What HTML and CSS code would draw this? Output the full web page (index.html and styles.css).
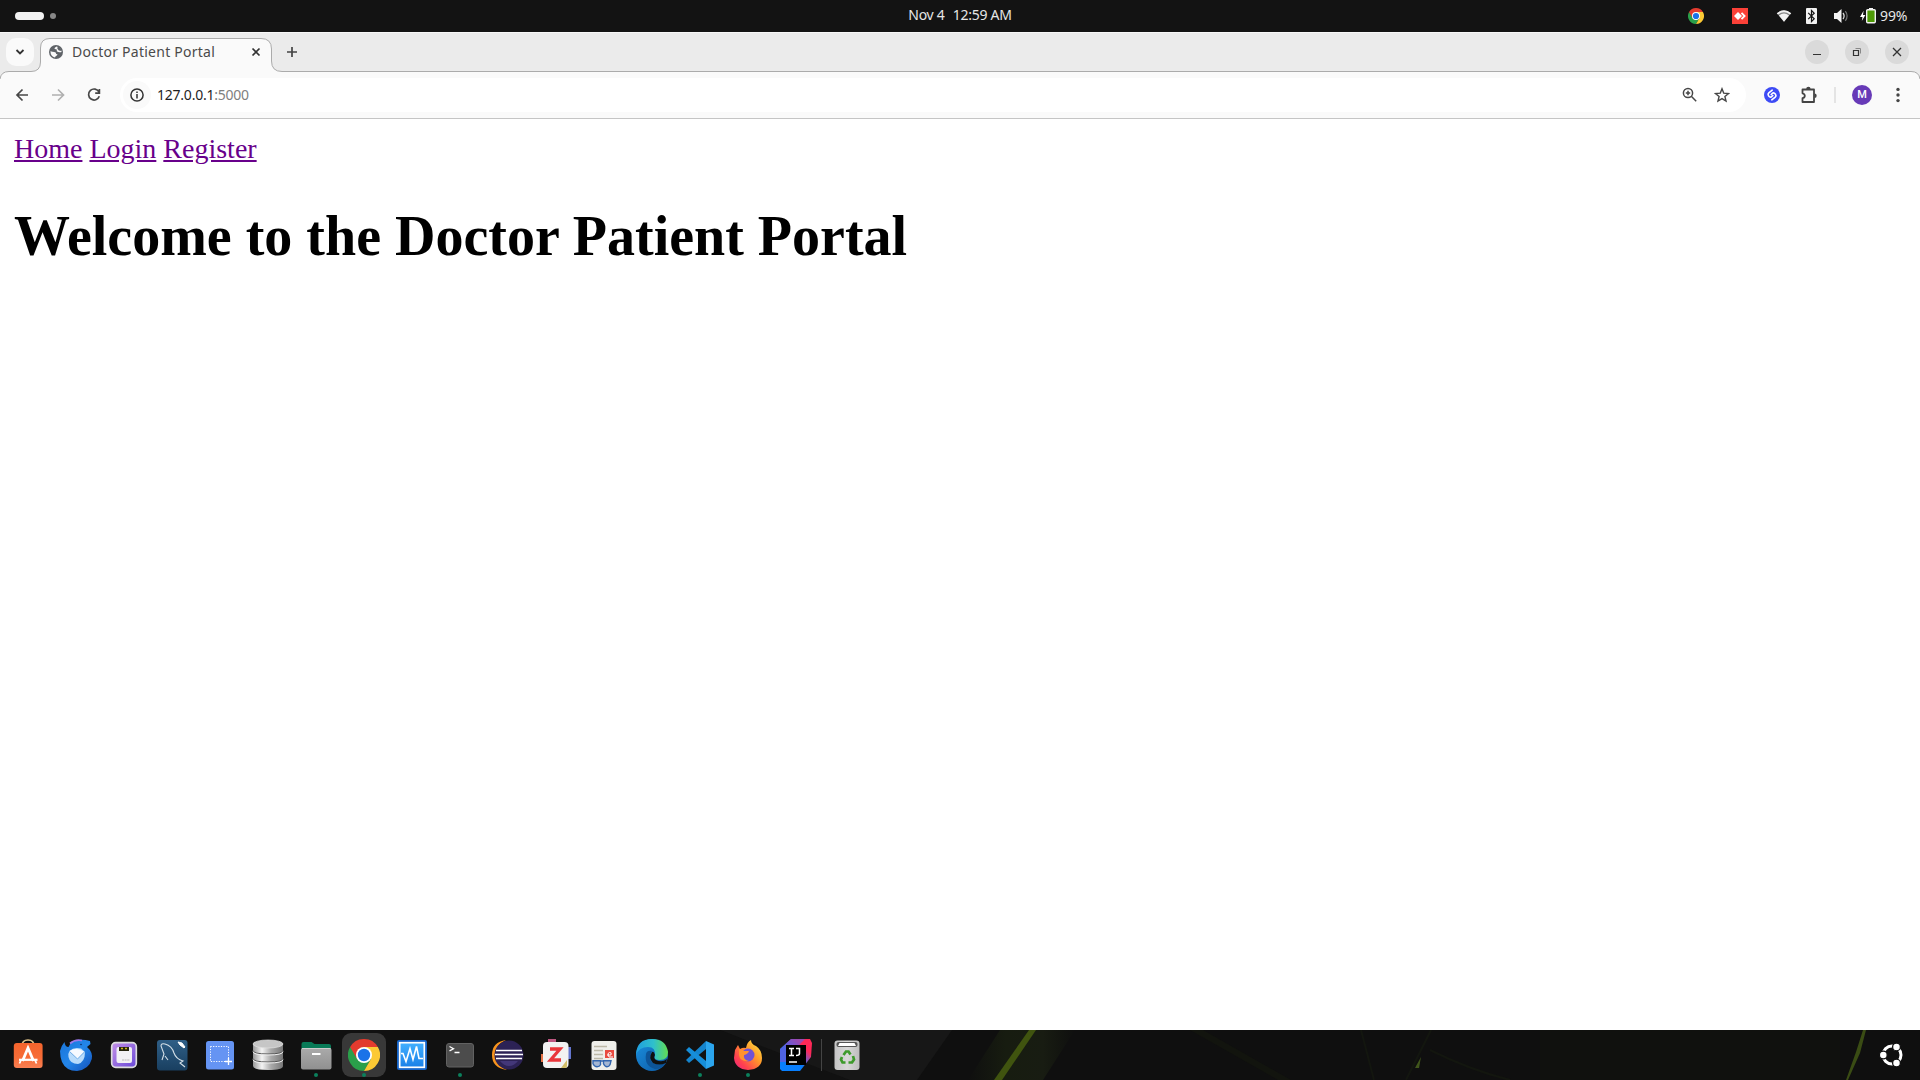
FILE: index.html
```html
<!DOCTYPE html>
<html lang="en">
<head>
<meta charset="utf-8">
<title>Doctor Patient Portal</title>
<link rel="stylesheet" href="styles.css">
</head>
<body>
<svg width="0" height="0" class="defs">
  <defs>
    <linearGradient id="bag" x1="0" y1="0" x2="0" y2="1"><stop offset="0" stop-color="#f4642c"/><stop offset=".6" stop-color="#f76d38"/><stop offset="1" stop-color="#fa8053"/></linearGradient>
    <linearGradient id="bird" x1="0" y1="0" x2="1" y2="1"><stop offset="0" stop-color="#1a74d8"/><stop offset=".5" stop-color="#2386ea"/><stop offset="1" stop-color="#1450b8"/></linearGradient>
    <linearGradient id="purp" x1="0" y1="0" x2="1" y2="1"><stop offset="0" stop-color="#c490e8"/><stop offset="1" stop-color="#6848d8"/></linearGradient>
    <linearGradient id="sql" x1="0" y1="0" x2="0" y2="1"><stop offset="0" stop-color="#2f5f87"/><stop offset="1" stop-color="#193f60"/></linearGradient>
    <linearGradient id="metal"><stop offset="0" stop-color="#999"/><stop offset=".3" stop-color="#f4f4f4"/><stop offset=".6" stop-color="#aaa"/><stop offset="1" stop-color="#777"/></linearGradient>
    <linearGradient id="gray" x1="0" y1="0" x2="0" y2="1"><stop offset="0" stop-color="#aaa"/><stop offset="1" stop-color="#909090"/></linearGradient>
    <linearGradient id="vm" x1="0" y1="0" x2="0" y2="1"><stop offset="0" stop-color="#42b0ff"/><stop offset="1" stop-color="#1a80e8"/></linearGradient>
    <linearGradient id="edge1"><stop offset="0" stop-color="#1f9ee0"/><stop offset=".55" stop-color="#2fc0cc"/><stop offset="1" stop-color="#62dd50"/></linearGradient>
    <linearGradient id="edge2" x1="0" y1="0" x2="1" y2="1"><stop offset="0" stop-color="#1b90df"/><stop offset="1" stop-color="#0c59a4"/></linearGradient>
    <linearGradient id="fox" x1="1" y1="0" x2="0" y2="1"><stop offset="0" stop-color="#fff04a"/><stop offset=".4" stop-color="#ff9a2a"/><stop offset=".75" stop-color="#ff3f50"/><stop offset="1" stop-color="#e8208a"/></linearGradient>
    <linearGradient id="ij" x1="0" y1="1" x2="1" y2="0"><stop offset="0" stop-color="#0880ff"/><stop offset=".42" stop-color="#087cfa"/><stop offset=".6" stop-color="#8850b8"/><stop offset=".75" stop-color="#fe2857"/><stop offset="1" stop-color="#fe2857"/></linearGradient>
    <linearGradient id="bin"><stop offset="0" stop-color="#c4c4c4"/><stop offset=".5" stop-color="#d8d8d8"/><stop offset="1" stop-color="#bdbdbd"/></linearGradient>
    <linearGradient id="glow"><stop offset="0" stop-color="#171c10" stop-opacity="0"/><stop offset=".35" stop-color="#171c10"/><stop offset=".7" stop-color="#181c12"/><stop offset="1" stop-color="#171c10" stop-opacity="0"/></linearGradient>
    <symbol id="chrome" viewBox="-16 -16 32 32">
      <path d="M-13.86-8A16 16 0 0 1 13.86-8H0Z" fill="#e33b2e"/>
      <path d="M-13.86-8A16 16 0 0 0 0 16L6.93 4L0 0Z" fill="#2a9f4a"/>
      <path d="M13.86-8A16 16 0 0 1 0 16L6.93 4L0-8Z" fill="#fcc934"/>
      <path d="M-13.86-8L-6.93 4L0-8Z" fill="#2a9f4a"/>
      <path d="M-13.86-8L-6.93 4L-4-6L0-8H13.86Z" fill="#e33b2e"/>
      <circle r="8" fill="#fff"/><circle r="6.2" fill="#1a73e8"/>
    </symbol>
  </defs>
</svg>

<header class="topbar">
  <div class="workspaces"><span class="pill"></span><span class="dot"></span></div>
  <div class="clock"><span>Nov 4</span><span>12:59 AM</span></div>
  <div class="tray">
    <svg class="t-chrome" width="16" height="16"><use href="#chrome" width="16" height="16"/></svg>
    <svg class="t-desk" width="16" height="16"><path fill="#fb4138" d="M0 0h16v16H0z"/><path fill="#fff" d="M6 4l4 4-4 4-4-4z"/><path d="M9.5 4.800L12.600 8l-3.100 3.200" fill="none" stroke="#fff" stroke-width="1.800"/></svg>
    <svg class="t-wifi" width="16" height="16"><path d="M.8 5.200Q8-.8 15.200 5.200L8 13.800Z" fill="#888"/><path d="M.8 5.200Q8-.8 15.200 5.200L14 6.600Q8 1.800 2 6.600Z" fill="#f4f4f4"/><path d="M3 7.400Q8 3.600 13 7.400L8 13.800Z" fill="#f4f4f4"/></svg>
    <svg class="t-bt" width="11" height="16"><rect width="11" height="16" rx="1" fill="#f2f2f2"/><path d="M2.200 4.800l6 6-2.700 2.700v-11l2.700 2.700-6 6" fill="none" stroke="#151515" stroke-width="1.200"/></svg>
    <svg class="t-vol" width="16" height="16"><path d="M1 5h3l4.500-4v14L4 11H1z" fill="#f4f4f4"/><path d="M10 5q2.200 3 0 6" stroke="#ddd" fill="none" stroke-width="1.300"/><path d="M12.300 3.200q3.600 4.800 0 9.600" stroke="#777" fill="none" stroke-width="1.200"/></svg>
    <svg class="t-bat" width="16" height="16"><path d="M3.600 2.800L0 9h2.500L1.800 13 5.400 7H3z" fill="#fff"/><path d="M9 0h4v2H9z" fill="#f2f2f2"/><rect x="6.700" y="1.700" width="8.600" height="13" rx="1" fill="#4e9a06" stroke="#f2f2f2" stroke-width="1.400"/></svg>
    <span class="pct">99%</span>
  </div>
</header>

<section class="chrome">
  <svg class="frame" width="1920" height="86"><path d="M0 47Q1 39.500 9 39.500H31Q40.500 39.500 40.500 30V16Q40.500 6.500 50 6.500H261Q271.500 6.500 271.500 17V29Q271.500 39.500 282 39.500H1911Q1919 39.500 1920 47V87H0Z" fill="#fafafa"/><path d="M0 47Q1 39.500 9 39.500H31Q40.500 39.500 40.500 30V16Q40.500 6.500 50 6.500H261Q271.500 6.500 271.500 17V29Q271.500 39.500 282 39.500H1911Q1919 39.500 1920 47" fill="none" stroke="#ababab"/></svg>
  <div class="tabs">
    <button class="search"><svg width="10" height="8"><path d="M1.500 2L5 5.500 8.500 2" fill="none" stroke="#333" stroke-width="1.800"/></svg></button>
    <div class="tab">
      <svg width="14" height="14" viewBox="0 0 14 14"><circle cx="7" cy="7" r="7" fill="#5f6368"/><path d="M1.400 6.300Q3.500 7 5.200 7q2 .2 2 1.900l1.300.4q-.2 1.500-1.700 1.600L6 12.600Q1.600 11.500 1.400 6.300M7.800 1.400Q5.500 2.200 5.400 3.600 6 4.600 7.500 4.300 8 5.200 7.800 6.300 9.500 7.600 12.600 7 12.400 3 7.800 1.400" fill="#fafafa"/><path d="M8.600 1.500L8.400 3.700 9.800 5.600l2.700.4Q12 2.800 8.600 1.500" fill="#5f6368"/></svg>
      <span class="title">Doctor Patient Portal</span>
      <svg width="10" height="10"><path d="M1.500 1.500l7 7m0-7l-7 7" stroke="#333" stroke-width="1.700"/></svg>
    </div>
    <svg class="plus" width="10" height="10"><path d="M5 0v10M0 5h10" stroke="#444" stroke-width="1.700"/></svg>
    <div class="winbtns">
      <i><svg width="24" height="24"><path d="M8 14.500h8" stroke="#333"/></svg></i>
      <i><svg width="24" height="24"><path d="M8.500 10.500h5v5h-5z" fill="none" stroke="#333" stroke-width="1.200"/><path d="M10.500 8.500h5v5" fill="none" stroke="#888"/></svg></i>
      <i><svg width="24" height="24"><path d="M8 8l8 8m0-8l-8 8" stroke="#333" stroke-width="1.300"/></svg></i>
    </div>
  </div>
  <div class="toolbar">
    <svg class="nav" width="16" height="16"><path d="M14 8H3.200M8.500 2.500L3 8l5.500 5.500" fill="none" stroke="#474747" stroke-width="1.700"/></svg>
    <svg class="nav" width="16" height="16"><path d="M2 8h11M8 2.500L13.500 8 8 13.500" fill="none" stroke="#b0b0b0" stroke-width="1.700"/></svg>
    <svg class="nav" width="16" height="16"><path d="M13 5A5.500 5.500 0 1 0 13.300 9.300M13.400 2v4.100H9.200" fill="none" stroke="#474747" stroke-width="1.700"/></svg>
    <div class="omni">
      <span class="info"><svg width="14" height="14"><circle cx="7" cy="7" r="6.100" fill="none" stroke="#333" stroke-width="1.500"/><path d="M7 6v4.500M7 3.400v1.500" stroke="#333" stroke-width="1.500"/></svg></span>
      <span class="url">127.0.0.1<em>:5000</em></span>
      <svg class="mag" width="16" height="16"><circle cx="6" cy="6" r="4.600" fill="none" stroke="#474747" stroke-width="1.500"/><path d="M9.300 9.300l4.900 4.900M6 3.800v4.400M3.800 6h4.400" stroke="#474747" stroke-width="1.500"/></svg>
      <svg class="star" width="16" height="16"><path d="M8 1.800l1.700 4.300 4.800.4-3.600 3 1.100 4.600L8 11.600l-4 2.500 1.100-4.600-3.600-3 4.800-.4z" fill="none" stroke="#474747" stroke-width="1.400"/></svg>
    </div>
    <svg class="ext1" width="16" height="16"><circle cx="8" cy="8" r="8" fill="#3d4bf5"/><path d="M7.600 9.600Q6.600 10.600 5.400 9.600L4.500 8.700Q3.400 7.200 4.800 5.900L8.200 3.200M8.400 6.400Q9.400 5.400 10.600 6.400L11.500 7.300Q12.600 8.800 11.200 10.100L7.800 12.800M7.600 9.600L8.800 8.500M8.400 6.400L7.200 7.500" fill="none" stroke="#fff" stroke-width="1.600" stroke-linecap="round"/></svg>
    <svg class="puz" width="18" height="18"><path d="M2.500 3.500h11.500v12.500H2.500V12.200q2.300-.4 2.300-2.400T2.500 7.300z" fill="none" stroke="#444" stroke-width="1.800" stroke-linejoin="round"/><path d="M6.200 3a2.200 2.200 0 0 1 4.400 0zM14.500 7.500a2.200 2.200 0 0 1 0 4.400z" fill="#444"/></svg>
    <span class="vline"></span>
    <span class="avatar">M</span>
    <svg class="menu" width="4" height="16"><g fill="#444"><circle cx="2" cy="2.400" r="1.700"/><circle cx="2" cy="8" r="1.700"/><circle cx="2" cy="13.600" r="1.700"/></g></svg>
  </div>
</section>

<main class="page">
  <nav><a href="#">Home</a> <a href="#">Login</a> <a href="#">Register</a></nav>
  <h1>Welcome to the Doctor Patient Portal</h1>
</main>

<footer class="dock">
  <svg class="wall" width="1920" height="50">
    <path d="M600 0H952L917 50H840L720 0Z" fill="#171717"/><path d="M0 0H720L850 50H0Z" fill="#111"/>
    <path d="M1000 0h75l-32 50h-75z" fill="url(#glow)"/>
    <path d="M1029 0h7l-34 50h-8z" fill="#40540f"/>
    <path d="M1190 0h13l88 50h-13z" fill="#12140e"/>
    <path d="M1540 0h300v50h-300z" fill="#10110e"/>
    <path d="M1361 0l13 50M1431 0l-25 50M1430 20q40 20 80 30" stroke="#13160f" stroke-width="2" fill="none"/>
    <path d="M1421 27l-2 11h-4z" fill="#40561b"/>
    <path d="M1863 0h3l-6 23-12 27h-2l10-28z" fill="#3a4c14"/>
  </svg>
  <svg width="48" height="50"><path d="M18 16Q18 10 24 10T30 16" fill="none" stroke="#ddc28a" stroke-width="1.600"/><rect x="9.800" y="13" width="28.800" height="25" rx="3" fill="url(#bag)"/><path d="M18.500 31L24 18l5.500 13" fill="none" stroke="#fff" stroke-width="2.800"/><path d="M15 29.800h18.500" stroke="#fff" stroke-width="2.200"/><path d="M17 30l-1.500 3.500m15.500-3.500l1.500 3.500" stroke="#fff" stroke-width="1.800"/></svg>
  <svg width="48" height="50"><path d="M8 21Q9 16 12.500 12Q13 17 16.500 17 19 10.500 26 10 31 9 38 11L38.500 14 35 17Q41 22 39.800 29 37 39.500 25 41 14 41 10 32 8 27 8 21" fill="url(#bird)"/><path d="M18 13.500Q23 9 30 10.500" fill="none" stroke="#9d79e9" stroke-width="1.700"/><path d="M17.500 21Q22 16.500 29 18.500L33 22Q33 32 26 34 18 34 16.500 27Q16 23 17.500 21" fill="#b9dcfb"/><path d="M17.500 21Q24 17 32 21.500L25.500 29Z" fill="#f6faff"/><path d="M17.500 21.500l8 7.500 7-7" fill="none" stroke="#73afe8"/><circle cx="29" cy="14.500" r=".8" fill="#0d2c66"/></svg>
  <svg width="48" height="50"><rect x="11.700" y="12.700" width="24.600" height="24.600" rx="4" fill="url(#purp)" stroke="#ddd" stroke-width="1.700"/><rect x="16.500" y="17" width="15.500" height="16" rx="2" fill="#f2f1f5"/><path d="M19 17h10v4H19z" fill="#25230f"/><path d="M21 18.500h2m2 0h2" stroke="#cfb51e" stroke-width="1.500"/><path d="M22 30h8" stroke="#bbb" stroke-width="1.200" stroke-dasharray="2 .6"/></svg>
  <svg width="48" height="50"><rect x="9" y="10" width="30.500" height="30.500" rx="3" fill="url(#sql)"/><path d="M14 30L16 24 13 16Q13 13 17 14Q24 16 26 23Q28 29 35 31L32 33 37 37M17 26l3 4" fill="none" stroke="#d4e0e8" stroke-width="1.100"/><path d="M30 12l2 3 4 3 1-1-3-4z" stroke="#fff" fill="#fff" stroke-width="1"/></svg>
  <svg width="48" height="50"><rect x="10" y="11" width="28" height="28.500" rx="2.500" fill="#6594f3"/><rect x="14.500" y="16.500" width="18" height="15" fill="none" stroke="#fff" stroke-dasharray="1.200 1.400"/><path d="M32.500 28v7M29 31.500h7" stroke="#fff" stroke-width="1.300"/></svg>
  <svg width="48" height="50"><path d="M9 14v22q0 4 15 4t15-4V14z" fill="url(#metal)"/><path d="M9 20.500q0 3.500 15 3.500t15-3.500M9 28.500Q9 32 24 32t15-3.500" fill="none" stroke="#555" stroke-width="1"/><path d="M9 21.500q0 3.500 15 3.500t15-3.500M9 29.500Q9 33 24 33t15-3.500" fill="none" stroke="#eee" stroke-width="1"/><ellipse cx="24" cy="14" rx="15" ry="4" fill="#c6c6c6" stroke="#e2e2e2" stroke-width=".7"/></svg>
  <svg width="48" height="50"><path d="M9.500 20v-6q0-2 2-2h8l3 2H37q2 0 2 2v5z" fill="#087a57"/><rect x="9" y="18" width="30.500" height="21.500" rx="2" fill="url(#gray)"/><path d="M10 18.500h28.500" stroke="#ccc"/><path d="M20 24h8.500" stroke="#fff" stroke-width="2"/><circle cx="24" cy="45" r="2" fill="#0b805c"/></svg>
  <svg width="48" height="50"><rect x="2" y="3" width="44" height="44" rx="9" fill="#383838"/><use href="#chrome" x="8" y="9" width="32" height="32"/><circle cx="24" cy="45" r="2" fill="#0b805c"/></svg>
  <svg width="48" height="50"><rect x="9" y="10" width="30" height="30" rx="2" fill="#1564c8"/><rect x="11.700" y="12.700" width="24.600" height="24.600" fill="url(#vm)" stroke="#fff" stroke-width="1.700"/><path d="M13 23.500h2l3 8 4-13 3 11 3.500-13 2.500 12h4" fill="none" stroke="#fff" stroke-width="1.600"/></svg>
  <svg width="48" height="50"><rect x="10.500" y="13.500" width="27" height="23.500" rx="2.500" fill="#4c4c4c" stroke="#626262"/><path d="M13.500 16.500l4 2.200-4 2.200M18.500 22.500h5" stroke="#fff" stroke-width="1.300" fill="none"/><circle cx="24" cy="45" r="2" fill="#0b805c"/></svg>
  <svg width="48" height="50"><path d="M22 10Q8 12 8 25T23 40Q11 35 11 25T22 10" fill="#f7941e"/><circle cx="25" cy="25" r="14.500" fill="#2c2255"/><path d="M12 20.500h26M11 24.500h28M12 28.500h26" stroke="#fff" stroke-width="1.500"/><path d="M16 31h18q-4 5-9 5t-9-5" fill="#433779"/></svg>
  <svg width="48" height="50"><rect x="16" y="9" width="8" height="6" fill="#bd5780"/><rect x="9" y="24" width="5" height="8" fill="#e57347"/><rect x="34" y="17" width="5" height="12" fill="#6476cf"/><rect x="11" y="12" width="25.500" height="26" rx="4" fill="#f2f2f2"/><path d="M18 19h10L18.500 30H29" stroke="#e9363b" stroke-width="3.300" fill="none"/><path d="M29 38l6-8v6q0 2-2 2z" fill="#d2be68"/></svg>
  <svg width="48" height="50"><rect x="11.500" y="11" width="25" height="29" rx="3" fill="#efefeb"/><path d="M14 16.500h13M14 20.500h9M14 24.500h9M14 28.500h9" stroke="#bdb9a8" stroke-width="1.500"/><rect x="25" y="20" width="9" height="8" fill="#e94b40"/><path d="M27 25h4q1-3-1.500-2.500T29 27h4" stroke="#fff" fill="none"/><path d="M13 30.800h7.500v4q-1 2-3.500 2t-4-3zM23.500 30.800h7.500l-1 4q-1 2-3 2t-3.500-3zM20 31h4" fill="#a5b6d2" stroke="#3265ae" stroke-width="1.400"/></svg>
  <svg width="48" height="50"><circle cx="24" cy="25" r="16" fill="url(#edge2)"/><path d="M8 24Q9 9 24 9 38 9 40 22 40 30 32 30 25 30 27 26 28 17 20 17 11 17 8 25" fill="url(#edge1)"/><path d="M18 24Q16 36 27 39 34 39 38 33 29 37 24 32 20 28 24 21Q19 20 18 24" fill="#0d5498"/><path d="M27 25Q25 28 28 30Q34 33 39 29L38 33Q31 36 25 33 20 28 24 22Q26 21 27 25" fill="#101010"/></svg>
  <svg width="48" height="50"><path d="M30 11l8 3.500v21L30 39z" fill="#2ba5ed"/><path d="M30 11v8L13 33l-3-3z" fill="#1484cd"/><path d="M10 20l3-3 17 14v8z" fill="#168ed9"/><circle cx="24" cy="45" r="2" fill="#0b805c"/></svg>
  <svg width="48" height="50"><path d="M11 20l3-5 2 4q3-2 6-1 1-6 5-8 0 4 5 6 6 4 6 12 0 11-14 12-13-1-14-12z" fill="url(#fox)"/><circle cx="24" cy="25" r="6.500" fill="#7052d4"/><path d="M15 19q4 0 5 2l5 0q-1 3-5 4-1 5 5 6-9 1-10-6z" fill="#ff922e"/><circle cx="24" cy="45" r="2" fill="#0b805c"/></svg>
  <svg width="48" height="50"><path d="M19 9h19l2 4-1 14-11 14H10l-2-2V19z" fill="url(#ij)"/><path d="M19 9h14l-6 6H14v17H8V19z" fill="#6d58d9" opacity=".7"/><rect x="14" y="15" width="20" height="20" fill="#000"/><path d="M17 18.500h5m-2.500 0v7m-2.500 0h5M24 18.500h3.500v5q0 2-3.500 2M17 32h8" fill="none" stroke="#fff" stroke-width="1.500"/></svg>
  <span class="sep"></span>
  <svg width="48" height="50"><rect x="11.500" y="10.500" width="25" height="29.500" rx="3" fill="url(#bin)"/><rect x="13.500" y="12" width="21" height="5" rx="2" fill="#555"/><path d="M15 16l1.500-3h15l1.500 3z" fill="#fff"/><g fill="none" stroke="#3d9a2b" stroke-width="2.700"><path d="M20.500 25l2.500-3.500h2.500l2 3"/><path d="M30 26l1 3.500-2 3h-3.500"/><path d="M22.500 32.500H19.500l-1.500-3 1-2.500"/></g></svg>
  <svg class="ubuntu" width="26" height="26"><circle cx="13" cy="13" r="9" fill="none" stroke="#fff" stroke-width="3"/><g fill="#fff" stroke="#0f0f0f" stroke-width="1.300"><circle cx="4.300" cy="13" r="3.900"/><circle cx="17.500" cy="4.900" r="3.900"/><circle cx="17.500" cy="21.100" r="3.900"/></g></svg>
</footer>
</body>
</html>
```
FILE: styles.css
```css
* { box-sizing: border-box; }
body { margin: 0; height: 1080px; display: flex; flex-direction: column; background: #fff; overflow: hidden; font-family: "Noto Sans", sans-serif; }
svg { display: block; flex: none; }
.defs { position: absolute; }

.topbar { height: 32px; flex: none; background: #131313; color: #e6e6e6; display: grid; grid-template-columns: 1fr auto 1fr; align-items: center; font-size: 14px; }
.workspaces { display: flex; align-items: center; gap: 6px; padding-left: 15px; }
.pill { width: 29px; height: 8px; border-radius: 4px; background: #f2f2f2; }
.dot { width: 6px; height: 6px; border-radius: 3px; background: #888; }
.clock { display: flex; gap: 8px; letter-spacing: -.25px; line-height: 30px; height: 32px; }
.tray { display: flex; align-items: center; justify-content: flex-end; padding-right: 12px; }
.t-chrome { margin-right: 28px; }
.t-desk { margin-right: 28px; }
.t-wifi { margin-right: 14px; }
.t-bt { margin-right: 16px; }
.t-vol { margin-right: 11px; }
.t-bat { margin-right: 4px; }
.pct { width: 28px; letter-spacing: -.1px; line-height: 32px; white-space: nowrap; }

.chrome { height: 87px; flex: none; background: #ebebeb; position: relative; border-bottom: 1px solid #c5c5c5; box-shadow: inset 0 1px #f7f7f7; }
.frame { position: absolute; inset: 0; }
.tabs { position: relative; height: 40px; display: flex; align-items: center; padding-left: 6px; }
.search { width: 28px; height: 28px; border: 0; padding: 0; border-radius: 10px; background: #fafafa; display: grid; place-items: center; }
.tab { width: 230px; margin-left: 7px; padding: 0 10px 0 8px; display: flex; align-items: center; }
.title { font-size: 14px; letter-spacing: .25px; line-height: 20px; color: #4a4a4a; margin-left: 9px; flex: 1; white-space: nowrap; }
.plus { margin-left: 16px; }
.winbtns { margin-left: auto; display: flex; gap: 16px; padding-right: 11px; }
.winbtns i { width: 24px; height: 24px; border-radius: 50%; background: #dadada; }
.toolbar { position: relative; height: 46px; display: flex; align-items: center; padding: 0 20px 0 14px; }
.nav { margin-right: 20px; }
.omni { width: 1626px; height: 34px; margin-left: -2px; border-radius: 17px; background: #fff; display: flex; align-items: center; padding: 0 16px 0 3px; }
.info { width: 28px; height: 28px; border-radius: 50%; background: #fafafa; display: grid; place-items: center; }
.url { margin-left: 6px; font-size: 14px; letter-spacing: -.23px; line-height: 20px; color: #1f1f1f; flex: 1; }
.url em { font-style: normal; color: #808080; }
.mag { margin-right: 16px; }
.ext1 { margin-left: 18px; }
.puz { margin-left: 20px; }
.vline { width: 2px; height: 16px; background: #e4e4e4; margin-left: 16px; }
.avatar { width: 20px; height: 20px; margin-left: 16px; border-radius: 50%; background: #673ab7; color: #fff; font: 500 11px/20px Roboto, sans-serif; text-align: center; }
.menu { margin-left: 24px; }

.page { flex: 1; padding: 14px; font-family: "Liberation Serif", serif; font-size: 28px; color: #000; }
.page a { color: #68008b; }
.page h1 { font-size: 56px; margin: 38.5px 0; }

.dock { position: relative; height: 50px; flex: none; background: #0f0f0f; display: flex; align-items: center; padding-left: 4px; }
.dock > svg, .dock > .sep { position: relative; }
.dock > .wall { position: absolute; left: 0; top: 0; }
.sep { width: 1px; height: 32px; background: #444; margin: 0 1px; }
.dock > .ubuntu { margin: 0 15px 0 auto; }
```
